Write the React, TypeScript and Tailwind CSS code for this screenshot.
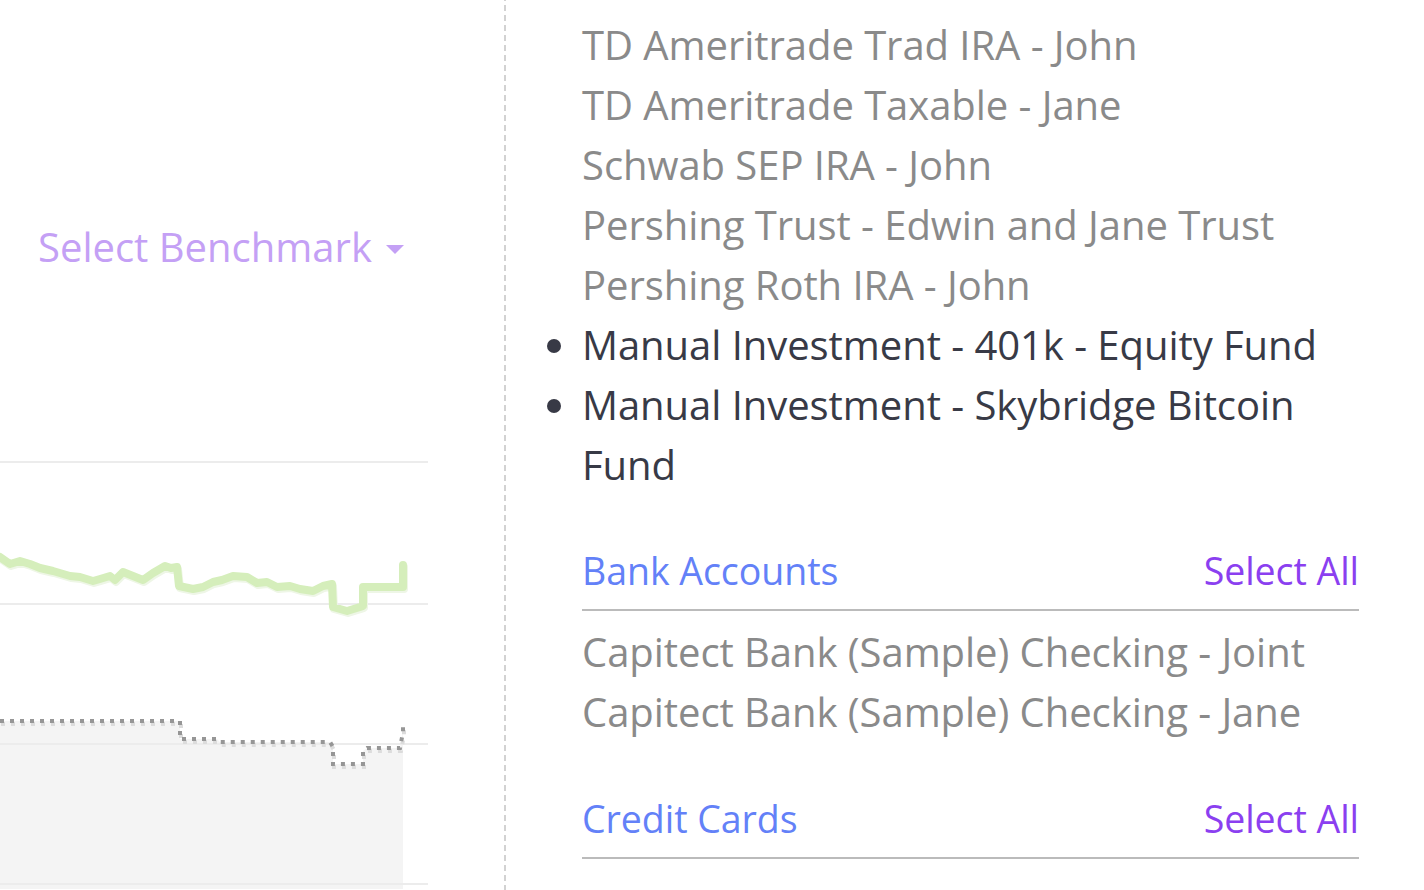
import React from "react";

const green =
  "M0,558 L10,565 L20,562 L30,565 L40,569 L53,572 L70,577 L80,578 L93,582 L100,580 L110,577 L115,581 L123,573 L133,577 L143,581 L153,574 L165,567 L171,569 L177,568 L179,587 L193,590 L203,588 L213,583 L222,581 L233,577 L247,578 L257,584 L267,583 L277,588 L290,587 L300,590 L313,592 L323,587 L332,585 L333,608 L347,612 L360,608 L363,607 L363,588 L403,588 L403,566";

const dotted =
  "M0,722 L180,722 L180,740 L217,740 L220,743 L330,743 L333,748 L333,765 L363,765 L363,752 L367,749 L400,749 L403,733 L403,725";

const fill =
  "M0,722 L180,722 L180,740 L217,740 L220,743 L330,743 L333,748 L333,765 L363,765 L363,752 L367,749 L400,749 L403,733 L403,725 L403,890 L0,890 Z";

type Item = { label: string; selected?: boolean };

const investments: Item[] = [
  { label: "TD Ameritrade Trad IRA - John" },
  { label: "TD Ameritrade Taxable - Jane" },
  { label: "Schwab SEP IRA - John" },
  { label: "Pershing Trust - Edwin and Jane Trust" },
  { label: "Pershing Roth IRA - John" },
  { label: "Manual Investment - 401k - Equity Fund", selected: true },
  { label: "Manual Investment - Skybridge Bitcoin Fund", selected: true },
];

const banks: Item[] = [
  { label: "Capitect Bank (Sample) Checking - Joint" },
  { label: "Capitect Bank (Sample) Checking - Jane" },
];

function AccountList({ items }: { items: Item[] }) {
  return (
    <ul className="pl-0">
      {items.map((item) => (
        <li
          key={item.label}
          className={
            item.selected
              ? "list-disc text-[#383a46]"
              : "list-none text-[#8a8a8a]"
          }
        >
          {item.label}
        </li>
      ))}
    </ul>
  );
}

function GroupHeader({ title }: { title: string }) {
  return (
    <div className="mt-12 flex items-baseline justify-between border-b-2 border-[#bbbbbb] pb-[10px] text-[37.5px] leading-[56px]">
      <span className="text-[#6381f8]">{title}</span>
      <button type="button" className="text-[#8b3ff0]">
        Select All
      </button>
    </div>
  );
}

function BenchmarkChart() {
  return (
    <svg
      className="mt-[162px] block"
      width={428}
      height={450}
      viewBox="0 440 428 450"
    >
      <path d={fill} fill="#f4f4f4" />
      {[463, 605, 745, 885].map((y) => (
        <line key={y} x1={0} x2={428} y1={y} y2={y} stroke="#ececec" strokeWidth={2} />
      ))}
      <path
        d={green}
        fill="none"
        stroke="#eef6e6"
        strokeWidth={8}
        strokeLinejoin="round"
        strokeLinecap="round"
        transform="translate(1,2)"
      />
      <path
        d={green}
        fill="none"
        stroke="#d5eebb"
        strokeWidth={8}
        strokeLinejoin="round"
        strokeLinecap="round"
      />
      <path
        d={dotted}
        fill="none"
        stroke="#dcdcdc"
        strokeWidth={4}
        strokeDasharray="4 6"
        transform="translate(1,3)"
      />
      <path d={dotted} fill="none" stroke="#969696" strokeWidth={4} strokeDasharray="4 6" />
    </svg>
  );
}

export default function App() {
  return (
    <div className="flex h-[890px] w-[1424px] overflow-hidden bg-white font-['Open_Sans',sans-serif]">
      <div className="flex w-[504px] shrink-0 flex-col">
        <div className="mt-[217px] flex h-[60px] items-center pl-[38px] text-[40px] leading-[60px] text-[#c4a0f5]">
          <span>Select Benchmark</span>
          <svg className="ml-[14px] mt-[4px]" width={18} height={9} viewBox="0 0 18 9">
            <path d="M0,0 L18,0 L9,9 Z" fill="#c4a0f5" />
          </svg>
        </div>
        <BenchmarkChart />
      </div>

      <div className="w-[2px] shrink-0 self-stretch bg-[repeating-linear-gradient(to_bottom,#d2d2d2_0_1px,transparent_1px_5px,#d2d2d2_5px_10px)]" />

      <div className="flex-1 pl-[76px] pr-[65px] pt-[15px] text-[40px] leading-[60px] tracking-[-0.05px]">
        <AccountList items={investments} />

        <GroupHeader title="Bank Accounts" />
        <div className="mt-[11px]">
          <AccountList items={banks} />
        </div>

        <div className="pt-px">
          <GroupHeader title="Credit Cards" />
        </div>
      </div>
    </div>
  );
}
